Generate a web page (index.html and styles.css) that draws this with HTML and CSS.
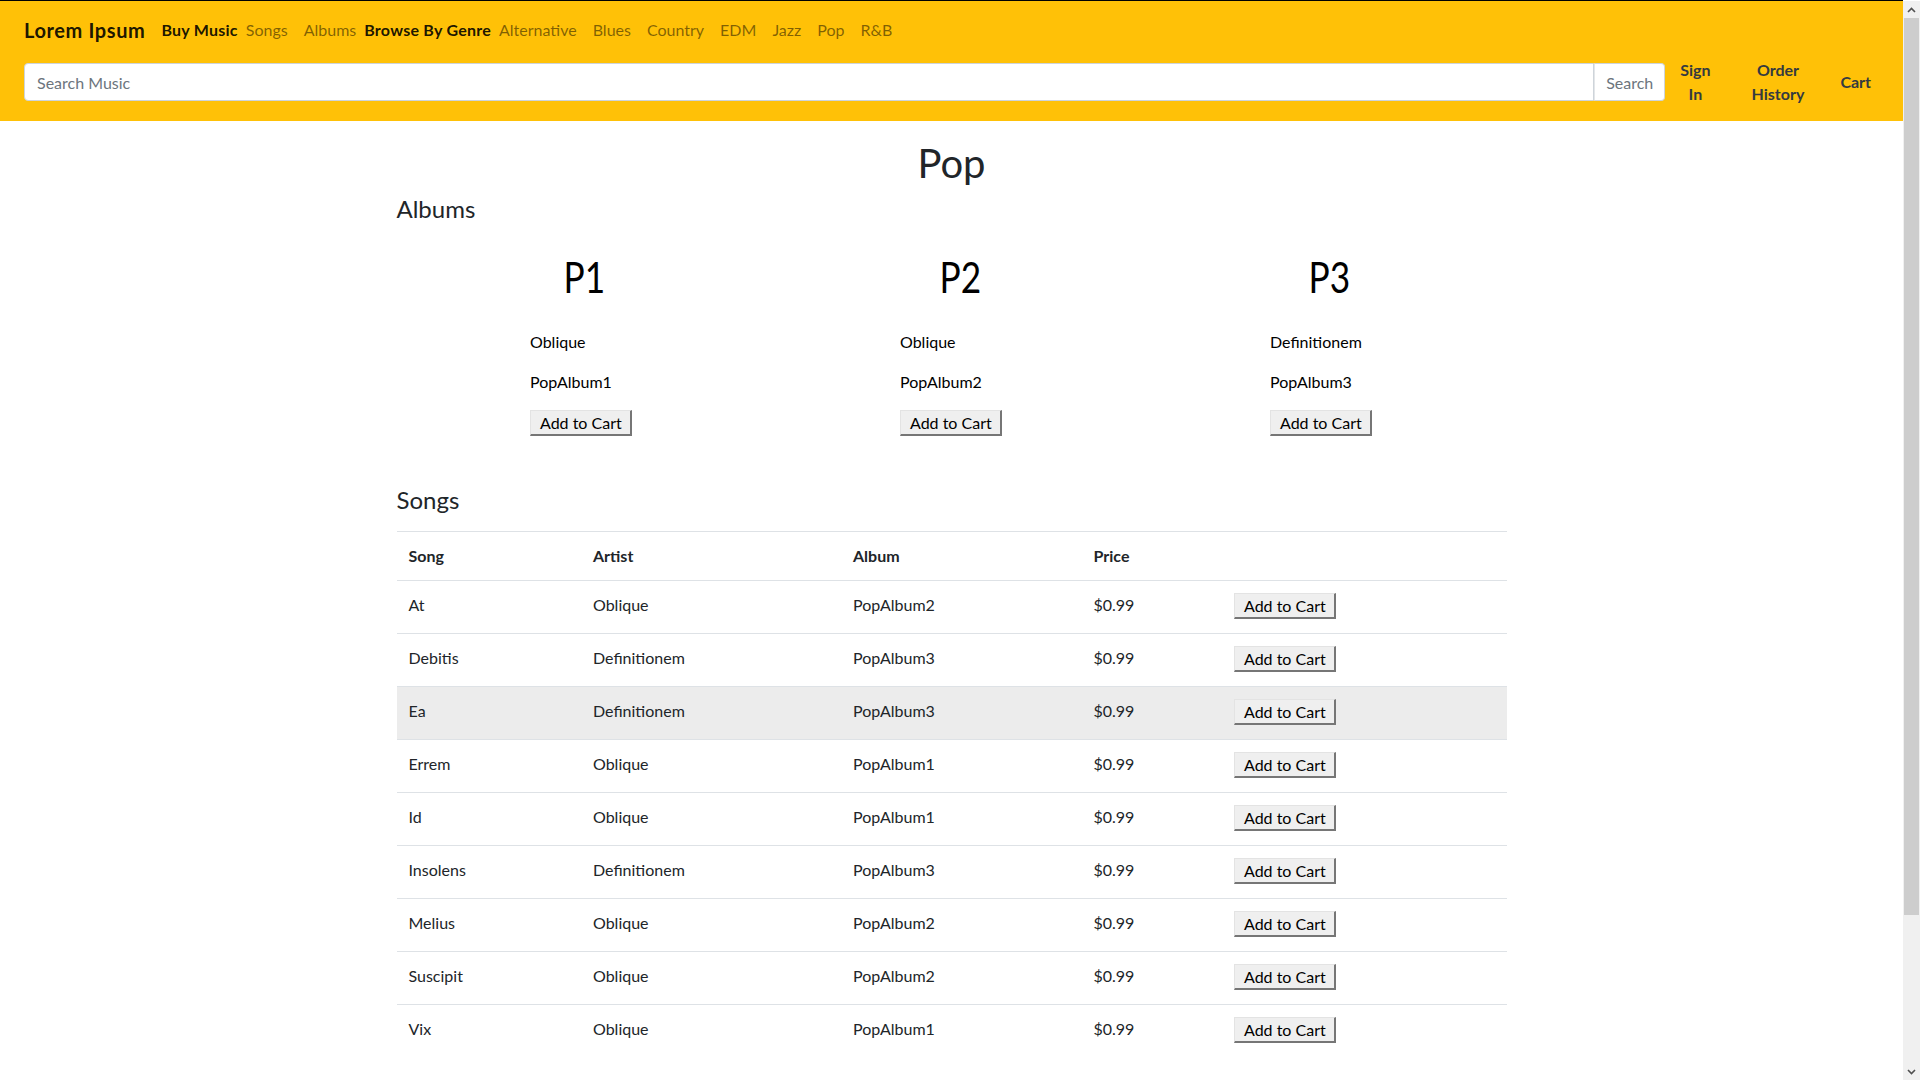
FILE: index.html
```html
<!DOCTYPE html>
<html lang="en">
<head>
<meta charset="utf-8">
<title>Lorem Ipsum - Pop</title>
<link rel="stylesheet" href="styles.css">
</head>
<body>
<header class="navbar">
  <nav class="nav-top">
    <a class="brand" href="#">Lorem Ipsum</a>
    <span class="nav-head">Buy Music</span>
    <a class="nav-link" href="#">Songs</a>
    <a class="nav-link" href="#">Albums</a>
    <span class="nav-head">Browse By Genre</span>
    <a class="nav-link" href="#">Alternative</a>
    <a class="nav-link" href="#">Blues</a>
    <a class="nav-link" href="#">Country</a>
    <a class="nav-link" href="#">EDM</a>
    <a class="nav-link" href="#">Jazz</a>
    <a class="nav-link" href="#">Pop</a>
    <a class="nav-link" href="#">R&amp;B</a>
  </nav>
  <div class="nav-bottom">
    <form class="search">
      <input class="search-input" type="text" placeholder="Search Music">
      <button class="search-btn" type="button">Search</button>
    </form>
    <a class="nav-right sign" href="#">Sign In</a>
    <a class="nav-right order" href="#">Order History</a>
    <a class="nav-right" href="#">Cart</a>
  </div>
</header>

<main class="container">
  <h1 class="page-title">Pop</h1>

  <h4 class="section-title">Albums</h4>
  <div class="albums">
    <div class="album-col">
      <div class="album">
        <div class="art"><span class="art-text">P1</span></div>
        <p class="album-line">Oblique</p>
        <p class="album-line">PopAlbum1</p>
        <button class="cart-btn" type="button">Add to Cart</button>
      </div>
    </div>
    <div class="album-col">
      <div class="album">
        <div class="art art-2"><span class="art-text">P2</span></div>
        <p class="album-line">Oblique</p>
        <p class="album-line">PopAlbum2</p>
        <button class="cart-btn" type="button">Add to Cart</button>
      </div>
    </div>
    <div class="album-col">
      <div class="album">
        <div class="art art-3"><span class="art-text">P3</span></div>
        <p class="album-line">Definitionem</p>
        <p class="album-line">PopAlbum3</p>
        <button class="cart-btn" type="button">Add to Cart</button>
      </div>
    </div>
  </div>

  <h4 class="section-title songs-title">Songs</h4>
  <table class="songs">
    <colgroup>
      <col class="c-song"><col class="c-artist"><col class="c-album"><col class="c-price"><col>
    </colgroup>
    <thead>
      <tr><th>Song</th><th>Artist</th><th>Album</th><th>Price</th><th></th></tr>
    </thead>
    <tbody>
      <tr><td>At</td><td>Oblique</td><td>PopAlbum2</td><td class="price">$0.99</td><td><button class="cart-btn" type="button">Add to Cart</button></td></tr>
      <tr><td>Debitis</td><td>Definitionem</td><td>PopAlbum3</td><td class="price">$0.99</td><td><button class="cart-btn" type="button">Add to Cart</button></td></tr>
      <tr class="hover"><td>Ea</td><td>Definitionem</td><td>PopAlbum3</td><td class="price">$0.99</td><td><button class="cart-btn" type="button">Add to Cart</button></td></tr>
      <tr><td>Errem</td><td>Oblique</td><td>PopAlbum1</td><td class="price">$0.99</td><td><button class="cart-btn" type="button">Add to Cart</button></td></tr>
      <tr><td>Id</td><td>Oblique</td><td>PopAlbum1</td><td class="price">$0.99</td><td><button class="cart-btn" type="button">Add to Cart</button></td></tr>
      <tr><td>Insolens</td><td>Definitionem</td><td>PopAlbum3</td><td class="price">$0.99</td><td><button class="cart-btn" type="button">Add to Cart</button></td></tr>
      <tr><td>Melius</td><td>Oblique</td><td>PopAlbum2</td><td class="price">$0.99</td><td><button class="cart-btn" type="button">Add to Cart</button></td></tr>
      <tr><td>Suscipit</td><td>Oblique</td><td>PopAlbum2</td><td class="price">$0.99</td><td><button class="cart-btn" type="button">Add to Cart</button></td></tr>
      <tr><td>Vix</td><td>Oblique</td><td>PopAlbum1</td><td class="price">$0.99</td><td><button class="cart-btn" type="button">Add to Cart</button></td></tr>
    </tbody>
  </table>
</main>

<div class="scrollbar" aria-hidden="true">
  <div class="sb-arrow">
    <svg width="9" height="6" viewBox="0 0 9 6"><path d="M1 5 L4.5 1.5 L8 5" fill="none" stroke="#505050" stroke-width="1.6"/></svg>
  </div>
  <div class="sb-track"><div class="sb-thumb"></div></div>
  <div class="sb-arrow">
    <svg width="9" height="6" viewBox="0 0 9 6"><path d="M1 1 L4.5 4.5 L8 1" fill="none" stroke="#505050" stroke-width="1.6"/></svg>
  </div>
</div>
</body>
</html>
```

FILE: styles.css
```css
body {
  margin: 0 17px 0 0;
  border-top: 1px solid #000;
  font-family: Lato, "Noto Sans", sans-serif;
  font-size: 16px;
  line-height: 1.5;
  color: #212529;
  background: #fff;
}

a {
  text-decoration: none;
}

/* ---------- faux browser scrollbar ---------- */
.scrollbar {
  position: fixed;
  top: 1px;
  right: 0;
  bottom: 0;
  width: 17px;
  background: #f0f0f0;
  display: flex;
  flex-direction: column;
}

.sb-arrow {
  height: 17px;
  display: flex;
  align-items: center;
  justify-content: center;
}

.sb-track {
  flex: 1;
  display: flex;
  flex-direction: column;
  padding: 0 1px;
}

.sb-thumb {
  height: 897px;
  background: #cdcdcd;
}

/* ---------- header ---------- */
.navbar {
  background: #ffc107;
  padding: 9px 16px 7px 24px;
}

.nav-top {
  display: flex;
  align-items: center;
  height: 40px;
}

.brand {
  font-size: 20px;
  font-weight: 700;
  letter-spacing: 0.6px;
  color: rgba(0, 0, 0, 0.9);
  line-height: 30px;
  padding: 5px 0;
  margin-right: 16px;
}

.nav-head {
  font-weight: 700;
  letter-spacing: 0.25px;
  color: rgba(0, 0, 0, 0.9);
  line-height: 24px;
}

.nav-link {
  color: rgba(0, 0, 0, 0.5);
  padding: 8px;
  line-height: 24px;
}

.nav-bottom {
  display: flex;
  align-items: center;
  height: 64px;
}

.search {
  flex: 1;
  display: flex;
  height: 38px;
  margin: 0;
}

.search-input {
  flex: 1;
  min-width: 0;
  height: 38px;
  box-sizing: border-box;
  border: 1px solid #ced4da;
  border-radius: 4px 0 0 4px;
  padding: 6px 12px;
  font-family: inherit;
  font-size: 16px;
  color: #495057;
  background: #fff;
  outline: none;
}

.search-input::placeholder {
  color: #6c757d;
}

.search-btn {
  height: 38px;
  box-sizing: border-box;
  border: 1px solid #ced4da;
  border-left: 1px solid #e3e6e9;
  border-radius: 0 4px 4px 0;
  background: #fff;
  color: #6c757d;
  font-family: inherit;
  font-size: 16px;
  padding: 6px 11px;
}

.nav-right {
  width: min-content;
  text-align: center;
  font-weight: 700;
  color: #343a40;
  line-height: 24px;
  padding: 8px 16px;
}

.nav-right.sign {
  padding-left: 15px;
  margin-right: 9px;
}

.nav-right.order {
  padding-right: 20px;
}

/* ---------- main ---------- */
.container {
  width: 1110px;
  margin: 0 auto;
  padding: 18px 0 200px;
}

.page-title {
  margin: 0 0 8px;
  text-align: center;
  font-size: 40px;
  font-weight: 400;
  line-height: 48px;
}

.section-title {
  margin: 0 0 8px;
  font-size: 24px;
  font-weight: 400;
  line-height: 28.8px;
}

.albums {
  display: grid;
  grid-template-columns: repeat(3, 1fr);
  margin-top: 28px;
}

.album-col {
  display: flex;
  justify-content: center;
}

.album {
  width: 103px;
}

.art {
  height: 50px;
  padding-left: 6px;
  text-align: center;
  margin-bottom: 28px;
}

.art.art-2 {
  padding-left: 18px;
}

.art.art-3 {
  padding-left: 16px;
}

.art-text {
  display: inline-block;
  font-size: 43px;
  line-height: 50px;
  transform: scaleX(0.82);
  color: #000;
}

.album-line {
  margin: 0 0 16px;
  color: #000;
  white-space: nowrap;
}

.cart-btn {
  font-family: inherit;
  font-size: 16px;
  line-height: 21px;
  color: #000;
  background: #efefef;
  padding: 1px 8px 1px 9px;
  border-style: solid;
  border-width: 1px 2px 2px 1px;
  border-color: #e3e3e3 #767676 #767676 #e3e3e3;
  border-radius: 0;
  white-space: nowrap;
}

.songs-title {
  margin-top: 50px;
  margin-bottom: 16px;
}

/* ---------- table ---------- */
.songs {
  width: 100%;
  border-collapse: collapse;
  table-layout: fixed;
}

.c-song { width: 184.5px; }
.c-artist { width: 260px; }
.c-album { width: 240.5px; }
.c-price { width: 140.5px; }

.songs th,
.songs td {
  padding: 12px;
  border-top: 1px solid #dee2e6;
  text-align: left;
  vertical-align: top;
  line-height: 24px;
}

.songs th {
  font-weight: 700;
}

.songs td .cart-btn {
  margin: 0 0 2px;
}

.songs tr.hover td {
  background: #ececec;
}
```
